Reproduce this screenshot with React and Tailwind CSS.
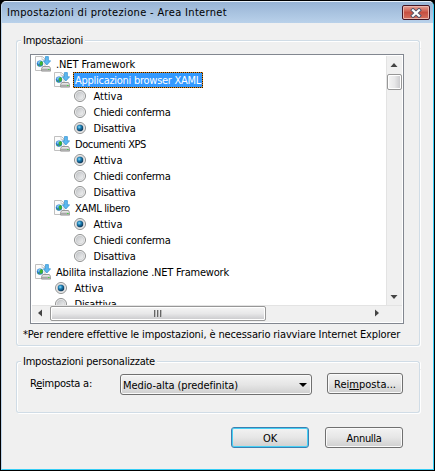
import { useLayoutEffect, useRef, useState } from "react";

// One line of text, tracked so that it spans exactly `w` pixels.
function Fit({ w, className = "translate-y-px", children }) {
  const ref = useRef(null);
  const [gap, setGap] = useState(0);
  useLayoutEffect(() => {
    const el = ref.current;
    const natural = el.getBoundingClientRect().width;
    setGap((w - natural) / el.textContent.length);
  }, [w]);
  return (
    <span ref={ref} className={`inline-block shrink-0 whitespace-pre ${className}`} style={{ letterSpacing: `${gap}px` }}>
      {children}
    </span>
  );
}

function PageIcon() {
  return (
    <svg viewBox="0 0 16 16" className="size-4 shrink-0">
      <path d="M.5 .5h7l2.500 2.500v11.500H.5z" fill="#fcfcfc" stroke="#c0c0c0" />
      <path d="M7 .5v3h3" fill="none" stroke="#c8c8c8" strokeWidth=".8" />
      <circle cx="5" cy="7.600" r="3.200" fill="#2c78cf" />
      <path d="M2.300 6.400c1-1.500 2.700-2 3.700-1.600L5.200 6.600 3.800 8.200z" fill="#7cc4f2" />
      <path d="M4.600 6.200l2-1.300 1.300 1.600-.3 2.300-1.800 1.500L5 8.500z" fill="#3fb52f" />
      <path d="M2.500 8.500l1.300.3.600 1.600-1-.4z" fill="#3fb52f" />
      <path d="M10.400 .6h3v4.200h2.200L11.900 9 8.300 4.800h2.100z" fill="#5cb8f0" stroke="#2f8fd0" strokeWidth=".7" />
      <path d="M7.800 10.500h6.600l1.200 2v2.600H6.600v-2.600z" fill="#e4e4e4" stroke="#858585" strokeWidth=".8" />
      <path d="M6.900 12.700h8.500v2.100H6.900z" fill="#a8a8a8" />
      <path d="M13 13h1.500v1H13z" fill="#43dc43" />
    </svg>
  );
}

function Radio({ on }) {
  return (
    <svg viewBox="0 0 12 12" className="size-3 shrink-0">
      <defs>
        <linearGradient id="dish" x1="0" y1="0" x2="1" y2="1">
          <stop offset="0" stopColor="#bfc2c5" />
          <stop offset="1" stopColor="#f6f6f6" />
        </linearGradient>
        <radialGradient id="bead" cx=".38" cy=".35" r=".65">
          <stop offset="0" stopColor="#8fdcfa" />
          <stop offset=".45" stopColor="#1c7fb4" />
          <stop offset="1" stopColor="#0b3557" />
        </radialGradient>
      </defs>
      <circle cx="6" cy="6" r="5.500" fill="#f4f4f4" stroke="#8e8f8f" />
      <circle cx="6" cy="6" r="3.900" fill="url(#dish)" stroke="#c3c5c7" strokeWidth=".6" />
      {on && <circle cx="6" cy="6" r="3.200" fill="url(#bead)" />}
    </svg>
  );
}

const rows = [
  { pad: "pl-[3px]", text: ".NET Framework", w: 79 },
  { pad: "pl-[22px]", text: "Applicazioni browser XAML", w: 126, selected: true },
  { pad: "pl-[42px]", text: "Attiva", w: 29, radio: true },
  { pad: "pl-[42px]", text: "Chiedi conferma", w: 77, radio: true },
  { pad: "pl-[42px]", text: "Disattiva", w: 42, radio: true, on: true },
  { pad: "pl-[22px]", text: "Documenti XPS", w: 71 },
  { pad: "pl-[42px]", text: "Attiva", w: 29, radio: true, on: true },
  { pad: "pl-[42px]", text: "Chiedi conferma", w: 77, radio: true },
  { pad: "pl-[42px]", text: "Disattiva", w: 42, radio: true },
  { pad: "pl-[22px]", text: "XAML libero", w: 55 },
  { pad: "pl-[42px]", text: "Attiva", w: 29, radio: true, on: true },
  { pad: "pl-[42px]", text: "Chiedi conferma", w: 77, radio: true },
  { pad: "pl-[42px]", text: "Disattiva", w: 42, radio: true },
  { pad: "pl-[3px]", text: "Abilita installazione .NET Framework", w: 173 },
  { pad: "pl-[23px]", text: "Attiva", w: 29, radio: true, on: true },
  { pad: "pl-[23px]", text: "Disattiva", w: 42, radio: true },
];

function Row({ row }) {
  return (
    <div className={`flex h-4 shrink-0 items-center ${row.pad}`}>
      {row.radio ? <Radio on={row.on} /> : <PageIcon />}
      {row.selected ? (
        <span className="ml-[3px] flex h-4 w-[130px] bg-[repeating-conic-gradient(#e08a1e_0_25%,#2a1a08_0_50%)] bg-[length:2px_2px] p-px">
          <span className="flex h-3.5 w-32 items-center bg-[#3399ff] pl-px text-white">
            <Fit w={row.w}>{row.text}</Fit>
          </span>
        </span>
      ) : (
        <Fit w={row.w} className={row.radio ? "ml-[7.5px] translate-y-px" : "ml-[5px] translate-y-px"}>{row.text}</Fit>
      )}
    </div>
  );
}

const face = "flex items-center rounded-[3px] border border-[#707070] bg-linear-to-b from-[#f3f3f3] from-0% via-[#e6e6e6] via-50% to-[#cfcfcf] shadow-[inset_0_0_0_1px_#fafafa]";

export default function App() {
  return (
    <div className="h-[471px] w-[435px] overflow-hidden bg-black p-px font-['DejaVu_Sans_Condensed','DejaVu_Sans',sans-serif] text-[11px] leading-4 text-black">
      <div className="flex h-full flex-col rounded-t-[5px] border border-t-[#e8f1fa] border-r-[#35cdf5] border-b-[#35cdf5] border-l-[#bcd3ea] bg-[#f0f0f0]">
        <header className="flex h-[21px] shrink-0 items-center justify-between rounded-t-[4px] bg-linear-to-b from-[#98b4d5] to-[#b9d1ea] pl-[5px] pr-[3px]">
          <Fit w={220} className="">Impostazioni di protezione - Area Internet</Fit>
          <button className="flex h-[15px] w-7 items-center justify-center rounded-[2px] border border-[#431422] bg-linear-to-b from-[#e5a196] via-[#c75042] via-50% to-[#d4705f] shadow-[inset_0_0_0_1px_#eab5ac]">
            <svg viewBox="0 0 12 10" className="h-2.5 w-3">
              <path d="M3 2.200l6 5.600M9 2.200l-6 5.600" stroke="#50536a" strokeWidth="4" strokeLinecap="square" />
              <path d="M3 2.200l6 5.600M9 2.200l-6 5.600" stroke="#fff" strokeWidth="2.200" strokeLinecap="square" />
            </svg>
          </button>
        </header>

        <main className="flex flex-col px-[14px] pt-[9px]">
          <fieldset className="h-[314px] w-[404px]">
            <div className="flex h-4 items-center">
              <i className="h-[8px] w-[5px] self-end rounded-tl-[3px] border-t border-l border-[#d0dce6] shadow-[inset_1px_1px_0_#fff]" />
              <Fit w={60} className="mx-0.5 translate-y-px">Impostazioni</Fit>
              <i className="h-[8px] grow self-end rounded-tr-[3px] border-t border-r border-[#d0dce6] shadow-[inset_0_1px_0_#fff,1px_0_0_#fff]" />
            </div>
            <div className="h-[298px] rounded-b-[3px] border border-t-0 border-[#d0dce6] pt-[6px] pl-[13px] shadow-[inset_1px_0_0_#fff,1px_1px_0_#fff]">
              <div className="flex h-[270px] w-[374px] flex-col border border-[#828790] bg-white p-px">
                <div className="flex h-[249px] shrink-0">
                  <div className="flex w-[354px] flex-col overflow-hidden">
                    {rows.map((row, i) => <Row key={i} row={row} />)}
                  </div>
                  <div className="flex w-4 flex-col items-center justify-between bg-[#f0f0f0] pb-[6px] shadow-[inset_1px_0_0_#e3e3e3]">
                    <div className="flex flex-col items-center">
                      <svg viewBox="0 0 8 4" className="mt-[7px] mb-[7px] h-1 w-2"><path d="M4 0l3.500 4h-7z" fill="#444" /></svg>
                      <div className="h-4 w-[15px] rounded-[2px] border border-[#979797] bg-linear-to-r from-[#f5f5f5] via-[#e8e8e9] via-50% to-[#c8c8cb] shadow-[inset_0_0_0_1px_#fff]" />
                    </div>
                    <svg viewBox="0 0 8 4" className="h-1 w-2"><path d="M.5 0h7L4 4z" fill="#444" /></svg>
                  </div>
                </div>
                <div className="flex h-[17px] shrink-0 items-center bg-[#f0f0f0] pb-px shadow-[inset_0_1px_0_#e3e3e3]">
                  <svg viewBox="0 0 4 8" className="mr-[8px] ml-[6px] h-2 w-1"><path d="M4 .5v7L0 4z" fill="#444" /></svg>
                  <div className="flex h-[15px] w-[216px] items-center justify-center gap-px rounded-[2px] border border-[#979797] bg-linear-to-b from-[#f5f5f5] via-[#e8e8e9] via-50% to-[#c8c8cb] shadow-[inset_0_0_0_1px_#fff]">
                    <i className="h-[7px] w-0.5 border-l border-[#666] bg-[#bbb]" />
                    <i className="h-[7px] w-0.5 border-l border-[#666] bg-[#bbb]" />
                    <i className="h-[7px] w-0.5 border-l border-[#666] bg-[#bbb]" />
                  </div>
                  <svg viewBox="0 0 4 8" className="ml-[109px] h-2 w-1"><path d="M0 .5v7L4 4z" fill="#444" /></svg>
                </div>
              </div>
              <div className="-ml-[7px] mt-[2px] flex"><Fit w={377}>*Per rendere effettive le impostazioni, è necessario riavviare Internet Explorer</Fit></div>
            </div>
          </fieldset>

          <fieldset className="mt-[7px] h-[60px] w-[404px]">
            <div className="flex h-4 items-center">
              <i className="h-[8px] w-[5px] self-end rounded-tl-[3px] border-t border-l border-[#d0dce6] shadow-[inset_1px_1px_0_#fff]" />
              <Fit w={132} className="mx-0.5 translate-y-px">Impostazioni personalizzate</Fit>
              <i className="h-[8px] grow self-end rounded-tr-[3px] border-t border-r border-[#d0dce6] shadow-[inset_0_1px_0_#fff,1px_0_0_#fff]" />
            </div>
            <div className="flex h-[44px] items-start rounded-b-[3px] border border-t-0 border-[#d0dce6] pt-1 pl-[13px] shadow-[inset_1px_0_0_#fff,1px_1px_0_#fff]">
              <div className="mt-[2px] flex w-[90px]"><Fit w={62}>R<u>e</u>imposta a:</Fit></div>
              <div className={`${face} mt-px h-[21px] w-[192px] justify-between pl-[2px] pr-[4px]`}>
                <Fit w={115}>Medio-alta (predefinita)</Fit>
                <svg viewBox="0 0 8 4" className="h-1 w-2"><path d="M0 0h8L4 4z" /></svg>
              </div>
              <button className={`${face} ml-[15px] h-[21px] w-[76px] justify-center`}><Fit w={62}>Rei<u>m</u>posta...</Fit></button>
            </div>
          </fieldset>

          <div className="mt-[14px] flex justify-end gap-4 pr-4">
            <button className="flex h-[21px] w-[78px] items-center justify-center rounded-[3px] border border-[#3c7fb1] bg-linear-to-b from-[#f3f3f3] from-0% via-[#e6e6e6] via-50% to-[#cfcfcf] shadow-[inset_0_0_0_1px_#46d0f5]"><Fit w={14}>OK</Fit></button>
            <button className={`${face} h-[21px] w-[78px] justify-center`}><Fit w={35}>Annulla</Fit></button>
          </div>
        </main>
      </div>
    </div>
  );
}
